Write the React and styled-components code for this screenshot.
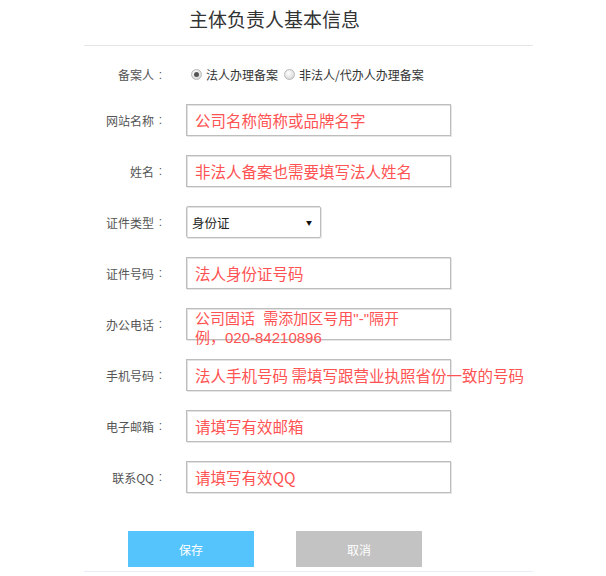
import React from "react";
import styled, { createGlobalStyle } from "styled-components";

const Global = createGlobalStyle`
  html, body { margin: 0; padding: 0; background: #fff; }
  body { font-family: "Noto Sans CJK SC", "Noto Sans", sans-serif; }
  * { box-sizing: border-box; }
`;

const Page = styled.div`
  width: 606px;
  height: 576px;
  background: #fff;
  overflow: hidden;
`;

const Title = styled.h1`
  margin: 0;
  padding-left: 189px;
  height: 45px;
  line-height: 38px;
  font-size: 19px;
  font-weight: 400;
  color: #333;
`;

const Divider = styled.div`
  margin: 0 73px 0 84px;
  height: 1px;
  background: ${(p) => p.$color || "#e6e6e6"};
`;

const Form = styled.div`
  display: flex;
  flex-direction: column;
  gap: 19px;
  padding-top: 18px;
`;

const Row = styled.div`
  display: flex;
  align-items: center;
  height: ${(p) => p.$h || 32}px;
`;

const Label = styled.div`
  width: 167px;
  flex: none;
  display: flex;
  justify-content: flex-end;
  align-items: center;
  font-size: 12px;
  color: #555;
`;

const Colon = styled.span`
  width: 13px;
  text-align: center;
  font-family: "Liberation Sans", sans-serif;
`;

const Field = styled.div`
  margin-left: 19px;
  display: flex;
  align-items: center;
  gap: 2px;
`;

const Radio = styled.span`
  width: 11px;
  height: 11px;
  border-radius: 50%;
  background: radial-gradient(circle at 40% 35%, #ffffff 0%, #e2e2e2 60%, #c9c9c9 100%);
  border: 1px solid #b8b8b8;
  display: inline-flex;
  align-items: center;
  justify-content: center;
  margin-left: ${(p) => (p.$first ? "5px" : "4px")};
  &::after {
    content: "";
    width: 5px;
    height: 5px;
    border-radius: 50%;
    background: ${(p) => (p.$checked ? "#555" : "transparent")};
  }
`;

const RadioText = styled.span`
  font-size: 12px;
  color: #333;
  margin-left: 2px;
`;

const Box = styled.div`
  margin-left: 19px;
  width: 265px;
  height: 32px;
  border: 1px solid #bdbdbd;
  box-shadow: inset 1px 1px 0 #e2e2e2, 1px 1px 0 #e6e6e6;
  background: #fff;
  display: flex;
  align-items: ${(p) => (p.$multi ? "flex-start" : "center")};
  padding-left: 8px;
`;

const Hint = styled.span`
  color: #ff5353;
  font-size: ${(p) => (p.$multi ? "15px" : "15.5px")};
  font-family: ${(p) =>
    p.$multi ? `"Liberation Sans", "Noto Sans CJK SC", sans-serif` : "inherit"};
  white-space: ${(p) => (p.$multi ? "pre" : "nowrap")};
  line-height: ${(p) => (p.$multi ? "19px" : "20px")};
`;

const Select = styled.div`
  margin-left: 19px;
  width: 135px;
  height: 32px;
  border: 1px solid #bdbdbd;
  box-shadow: inset 1px 1px 0 #e2e2e2, 1px 1px 0 #e6e6e6;
  border-radius: 2px;
  display: flex;
  align-items: center;
  justify-content: space-between;
  padding: 0 8px 0 5px;
  font-size: 12.5px;
  color: #222;
`;

const Arrow = styled.span`
  font-size: 6px;
  color: #111;
`;

const Buttons = styled.div`
  display: flex;
  gap: 42px;
  padding-left: 128px;
  margin-top: 38px;
  margin-bottom: 4px;
`;

const Button = styled.button`
  width: 126px;
  height: 36px;
  border: none;
  background: ${(p) => (p.$primary ? "#55c4fd" : "#c3c3c3")};
  color: #fff;
  font-family: inherit;
  font-size: 12px;
  padding: 0;
`;

const fields = [
  { label: "网站名称", hint: "公司名称简称或品牌名字" },
  { label: "姓名", hint: "非法人备案也需要填写法人姓名" },
  { label: "证件类型", select: "身份证" },
  { label: "证件号码", hint: "法人身份证号码" },
  { label: "办公电话", multi: true, hint: "公司固话  需添加区号用\"-\"隔开\n例，020-84210896" },
  { label: "手机号码", hint: "法人手机号码 需填写跟营业执照省份一致的号码" },
  { label: "电子邮箱", hint: "请填写有效邮箱" },
  { label: "联系QQ", hint: "请填写有效QQ" },
];

function FieldLabel({ children }) {
  return (
    <Label>
      {children}
      <Colon>:</Colon>
    </Label>
  );
}

export default function App() {
  return (
    <Page>
      <Global />
      <Title>主体负责人基本信息</Title>
      <Divider />
      <Form>
        <Row $h={21}>
          <FieldLabel>备案人</FieldLabel>
          <Field>
            <Radio $first $checked />
            <RadioText>法人办理备案</RadioText>
            <Radio />
            <RadioText>非法人/代办人办理备案</RadioText>
          </Field>
        </Row>
        {fields.map((f) => (
          <Row key={f.label}>
            <FieldLabel>{f.label}</FieldLabel>
            {f.select ? (
              <Select>
                <span>{f.select}</span>
                <Arrow>▼</Arrow>
              </Select>
            ) : (
              <Box $multi={f.multi}>
                <Hint $multi={f.multi}>{f.hint}</Hint>
              </Box>
            )}
          </Row>
        ))}
      </Form>
      <Buttons>
        <Button $primary>保存</Button>
        <Button>取消</Button>
      </Buttons>
      <Divider $color="#e8eef7" />
    </Page>
  );
}
